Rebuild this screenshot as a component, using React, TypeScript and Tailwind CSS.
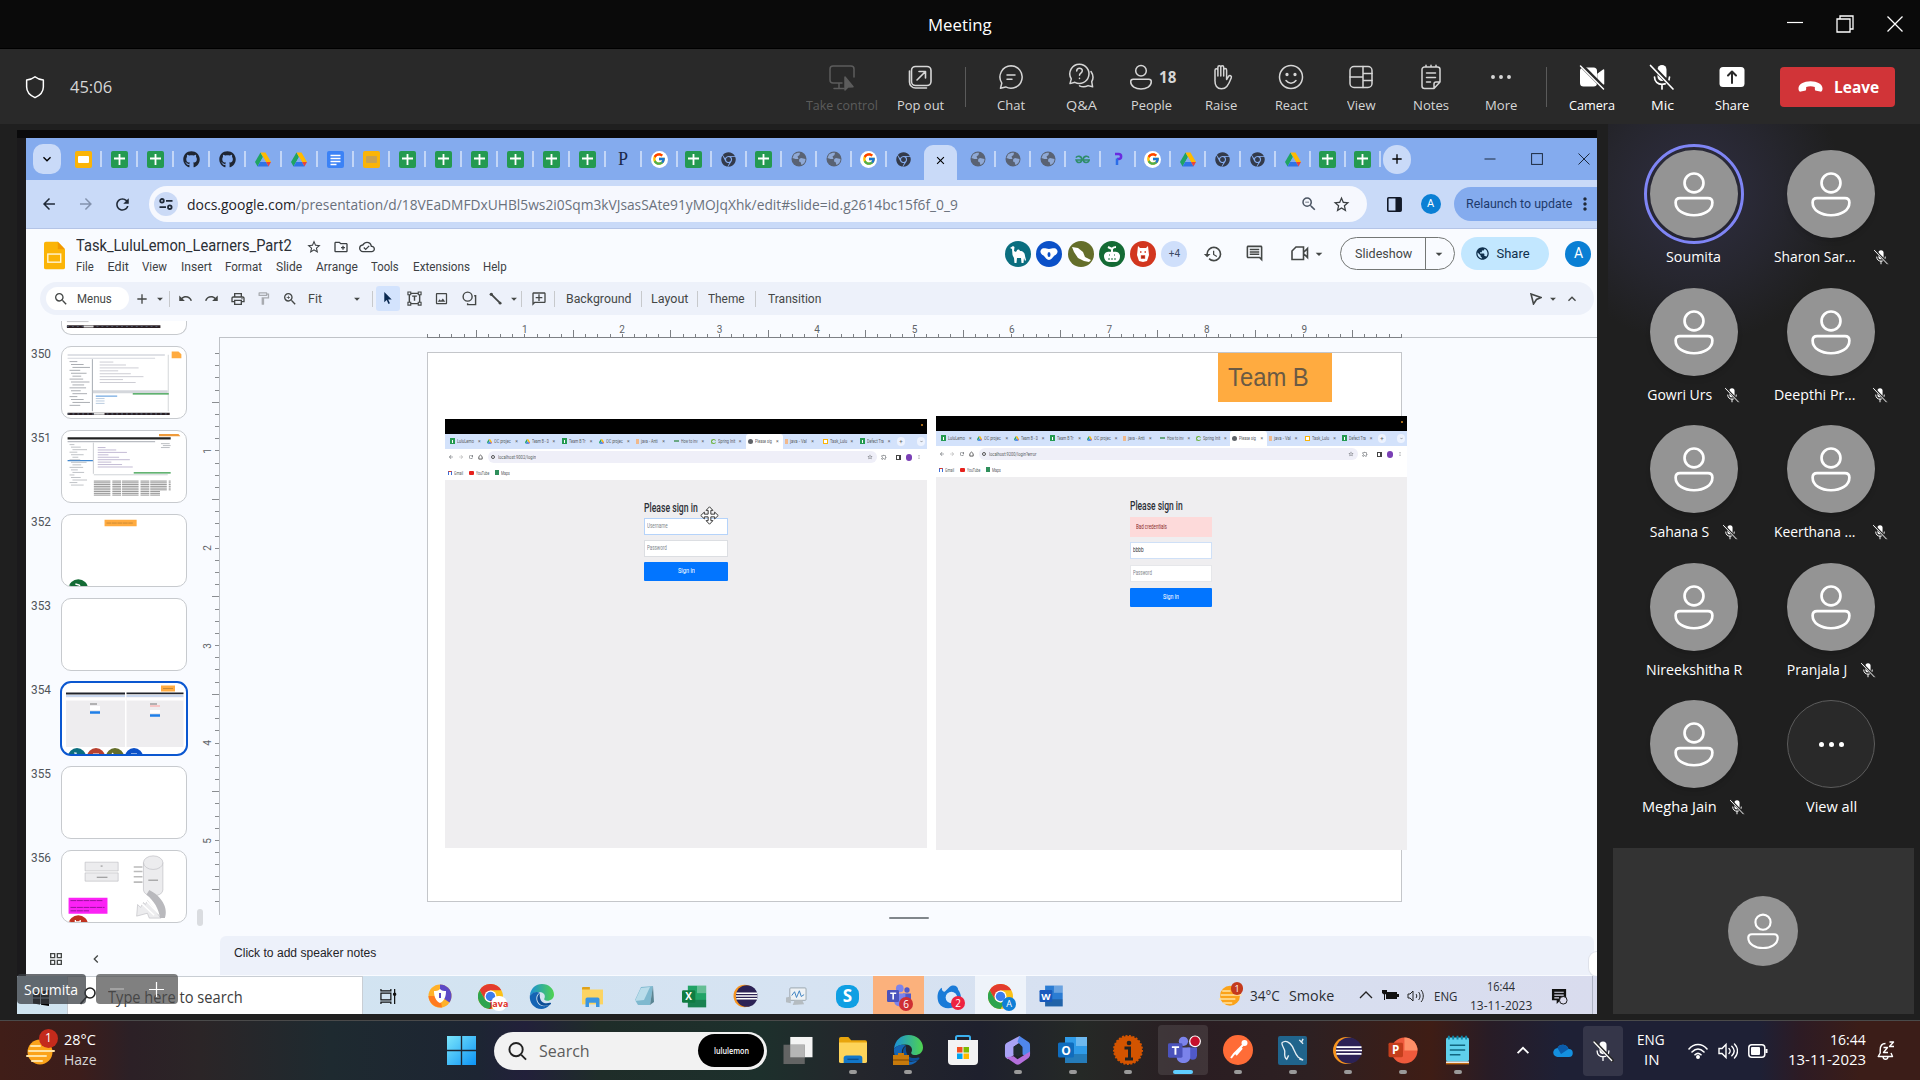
import React, { useLayoutEffect, useRef, useState } from "react";
import { FcGoogle } from "react-icons/fc";
import { FaGithub, FaChrome } from "react-icons/fa";
import {
  MdSearch, MdAdd, MdArrowDropDown, MdUndo, MdRedo, MdOutlinePrint, MdOutlineFormatPaint, MdZoomIn, MdZoomOut,
  MdOutlineImage, MdOutlineAddComment, MdHistory, MdOutlineInsertComment, MdPublic, MdStarBorder,
  MdOutlineCloudDone, MdArrowBack, MdArrowForward, MdRefresh, MdMoreVert, MdKeyboardArrowUp, MdKeyboardArrowDown,
  MdOutlineCreateNewFolder, MdOutlineGridView, MdKeyboardArrowLeft, MdClose, MdOutlineExtension,
} from "react-icons/md";

const UI = "font-['Open_Sans','Noto_Sans',sans-serif]";
const RB = "font-[Roboto,'Noto_Sans',sans-serif]";

/* A single line of text squeezed horizontally into a given width. */
function Fit({ w, className = "", children }: { w: number; className?: string; children: React.ReactNode }) {
  const ref = useRef<HTMLSpanElement>(null);
  const [s, setS] = useState(1);
  useLayoutEffect(() => {
    if (ref.current) setS(w / ref.current.offsetWidth);
  }, [w]);
  return (
    <span className={`block shrink-0 whitespace-nowrap ${className}`} style={{ width: w }}>
      <span ref={ref} className="inline-block origin-left" style={{ transform: `scaleX(${s})` }}>{children}</span>
    </span>
  );
}

/* ---------- Meeting icons ---------- */
type SP = { className?: string; children?: React.ReactNode; box?: string; sw?: number };
const S = ({ className = "h-7 w-7", children, box = "0 0 28 28", sw = 1.5 }: SP) => (
  <svg viewBox={box} className={`shrink-0 ${className}`} fill="none" stroke="currentColor" strokeWidth={sw} strokeLinecap="round" strokeLinejoin="round">{children}</svg>
);
const Person = ({ className }: { className?: string }) => (
  <S className={className}><circle cx="14" cy="7.8" r="5.3" /><path d="M6.2 16.3h15.6c1.6 0 2.5 1 2.5 2.4 0 4.600-4.900 7.200-10.300 7.200S3.700 23.300 3.700 18.700c0-1.400 .9-2.400 2.500-2.400Z" /></S>
);
const MicOff = ({ className = "h-7 w-7" }: { className?: string }) => (
  <S className={className} sw={1.7}>
    <rect x="9.500" y="2" width="9" height="16" rx="4.500" fill="currentColor" stroke="none" />
    <path d="M6.500 14c0 4.500 3.300 7.300 7.500 7.300s7.500-2.800 7.500-7.300M14 21.500V26" />
    <path d="M3.500 2.500 26 26" stroke="#292929" strokeWidth="4" /><path d="M2.500 2.500 25 26" />
  </S>
);

const toolA: { label: string; w: number; icon: React.ReactNode }[] = [
  { label: "Chat", w: 28, icon: <S><path d="M14 2.800a11.200 11.200 0 1 1-5.300 21.100L3.500 25.200l1.300-5.100A11.200 11.200 0 0 1 14 2.800Z" /><path d="M10 12h8M10 16.200h5" /></S> },
  { label: "Q&A", w: 31, icon: <S><path d="M12.500 1.200a9.600 9.600 0 1 1-4.600 18.100L3 20.600l1.300-4.700A9.600 9.600 0 0 1 12.500 1.200Z" /><path d="M9.700 8c0-3.600 5.600-3.600 5.600-.2 0 2.300-2.800 2.300-2.800 4.400M12.500 15.200v.2M24 8.500c2.300 3.300 2.600 7 .7 10.200l.9 5.100-4.500-1.200c-3.100 1.600-6 1.500-8.600.2" /></S> },
  { label: "People", w: 41, icon: <div className="flex items-center gap-1"><Person /><Fit w={17} className="mb-px text-[16px] font-bold leading-5">18</Fit></div> },
  { label: "Raise", w: 32, icon: <S><path d="M8 17V7.200c0-2.100 2.900-2.100 2.900 0V13 4.300c0-2.100 2.900-2.100 2.900 0V13 4.300c0-2.100 2.900-2.100 2.900 0V13 7c0-2.100 2.900-2.100 2.900 0v9.500l2-3.200c1.100-1.400 3.400-.4 2.700 1.400-1.300 3.500-2.500 6.300-4.500 8.700-1.300 1.600-3 2.400-5.400 2.400-4.800 0-6.500-3.900-6.500-8.800Z" /></S> },
  { label: "React", w: 33, icon: <S><circle cx="14" cy="14" r="11.500" /><circle cx="10" cy="11.500" r=".9" fill="currentColor" /><circle cx="18" cy="11.500" r=".9" fill="currentColor" /><path d="M9 17.500c2.700 3.500 7.300 3.500 10 0" /></S> },
  { label: "View", w: 29, icon: <S><rect x="3" y="3.500" width="22" height="21" rx="4" /><path d="M16 3.500v21M3 14h13M16 10.500h9M16 17.500h9" /></S> },
  { label: "Notes", w: 36, icon: <S><path d="M5 6.500A2.500 2.500 0 0 1 7.500 4h13A2.500 2.500 0 0 1 23 6.500V19l-6 6.500H7.500A2.500 2.500 0 0 1 5 23ZM17 25.500V21c0-1.200.8-2 2-2h4M9 4V2.300M14 4V2.300M19 4V2.300M9.500 10h9M9.500 14.500h9M9.500 19h4" /></S> },
  { label: "More", w: 32, icon: <S><circle cx="6" cy="14" r="1.200" fill="currentColor" /><circle cx="14" cy="14" r="1.200" fill="currentColor" /><circle cx="22" cy="14" r="1.200" fill="currentColor" /></S> },
];
const toolB: { label: string; w: number; icon: React.ReactNode }[] = [
  { label: "Camera", w: 46, icon: <S><rect x="2" y="4.500" width="17" height="19" rx="3.500" fill="currentColor" stroke="none" /><path d="m20 11 5.500-4v14L20 17Z" fill="currentColor" /><path d="M3.500 2.500 27 26" stroke="#292929" strokeWidth="4" /><path d="M2.500 3 25.500 26" /></S> },
  { label: "Mic", w: 23, icon: <MicOff /> },
  { label: "Share", w: 34, icon: <S sw={2}><rect x="1.500" y="4" width="25" height="20" rx="3.500" fill="currentColor" stroke="none" /><path d="M14 20V8.500M10 12.500l4-4 4 4" stroke="#292929" /></S> },
];

function ToolItem({ label, w, icon, className = "text-[#d6d6d6]" }: { label: string; w: number; icon: React.ReactNode; className?: string }) {
  return (
    <div className={`flex h-full w-[70px] shrink-0 flex-col items-center pt-[14px] ${className}`}>
      <div className="flex h-7 items-center">{icon}</div>
      <Fit w={w} className="mt-[4px] text-[13.500px] leading-5">{label}</Fit>
    </div>
  );
}

function MeetingBar() {
  return (
    <div className={`flex h-[75px] shrink-0 items-center bg-[#292929] ${UI}`}>
      <S className="ml-[22px] h-[26px] w-[26px] text-white" sw={1.6}><path d="M14 3c2.600 2.200 5.200 3.200 9 3.500v7.500c0 5.500-3.500 9-9 11.500-5.500-2.500-9-6-9-11.500V6.500C8.800 6.200 11.400 5.200 14 3Z" /></S>
      <Fit w={42} className="ml-[22px] mt-px text-[16.500px] leading-6 text-[#d6d6d6]">45:06</Fit>
      <div className="ml-[689px] flex h-full w-[82px] flex-col items-center pt-[14px] text-[#5c5c5c]">
        <S><path d="M14 20H5a3 3 0 0 1-3-3V6a3 3 0 0 1 3-3h18a3 3 0 0 1 3 3v8M11 20v5M6 25.500h10" /><path d="M17 14v13l3-3 5-.3Z" fill="currentColor" /></S>
        <Fit w={72} className="mt-[4px] text-[13.500px] leading-5">Take control</Fit>
      </div>
      <div className="ml-[2px] flex h-full"><ToolItem label="Pop out" w={47} icon={<S sw={1.6}><path d="M20.500 25h-11A6 6 0 0 1 3.500 19V8" /><rect x="5.500" y="3.500" width="19.500" height="19" rx="4" /><path d="M11 17 19.500 8.500M13 8.500h6.500V15" /></S>} /></div>
      <div className="ml-[10px] h-10 w-px bg-[#5a5a5a]" />
      <div className="ml-[10px] flex h-full">{toolA.map((t) => <ToolItem key={t.label} {...t} />)}</div>
      <div className="ml-[10px] h-10 w-px bg-[#5a5a5a]" />
      <div className="ml-[10px] flex h-full">{toolB.map((t) => <ToolItem key={t.label} {...t} className="text-white" />)}</div>
      <div className="ml-[13px] flex h-10 w-[115px] items-center rounded bg-[#d13438] pl-[18px] text-white">
        <svg viewBox="0 0 26 12" className="h-[12px] w-[25px]" fill="currentColor"><path d="M13 0c7 0 12.500 3 12.500 7.500 0 2-.8 3.600-2.500 3.300l-3.800-.8c-1.200-.3-1.700-1-1.700-2.300V6c-3-.9-6-.9-9 0v1.700c0 1.300-.5 2-1.700 2.300L3 10.800C1.300 11.100.5 9.500.5 7.500.5 3 6 0 13 0Z" /></svg>
        <Fit w={45} className="ml-[11px] text-[16.500px] font-bold leading-6">Leave</Fit>
      </div>
    </div>
  );
}

/* ---------- Small product icons ---------- */
const Sheet = () => <svg viewBox="0 0 17 17" className="h-[17px] w-[17px]"><rect width="17" height="17" rx="2" fill="#249a50" /><path d="M8.500 3v11M3 7.500h11" stroke="#fff" strokeWidth="1.800" /></svg>;
const SlidesIc = ({ hollow }: { hollow?: boolean }) => <svg viewBox="0 0 17 17" className="h-[17px] w-[17px]"><rect width="17" height="17" rx="2" fill="#fbb407" /><rect x="3" y="5" width="11" height="7" rx="1" fill={hollow ? "#c9a251" : "#fff"} /></svg>;
const Doc = () => <svg viewBox="0 0 17 17" className="h-[17px] w-[17px]"><rect width="17" height="17" rx="2" fill="#3b82f6" /><path d="M3.500 4.500h10M3.500 7.500h10M3.500 10.500h10M3.500 13.500h6" stroke="#fff" strokeWidth="1.500" /></svg>;
const Drive = ({ className = "h-[15px] w-[16px]" }: { className?: string }) => <svg viewBox="0 0 16 14" className={className}><path d="M5.500 0 0 9.500 2.500 14 8 4.500Z" fill="#1fa463" /><path d="M5.500 0h5L16 9.500h-5Z" fill="#ffba00" /><path d="M5.300 9.500H11L8 4.500Z" fill="#84abee" /><path d="M5.200 9.500H11L13.500 14h-11Z" fill="#2f74e6" /><path d="M11 9.500h5L13.500 14Z" fill="#e8453c" /></svg>;
const Globe = () => <svg viewBox="0 0 16 16" className="h-4 w-4"><circle cx="8" cy="8" r="7.500" fill="#596273" /><path d="M3 3.500C5 2 7 1.500 9 1.800L8.500 4l-2 1.500L7.500 8H4.500l-3-1ZM10 7l4.500 1c0 3-1.500 5-4 6L9.500 11l-1.500-.5.3-2.500Z" fill="#8fa9d6" /></svg>;
const Goog = () => <span className="flex h-[17px] w-[17px] items-center justify-center rounded-full bg-white"><FcGoogle className="h-[14px] w-[14px]" /></span>;
const Chr = () => <FaChrome className="h-[15px] w-[15px] text-[#333a4a]" />;
const Git = () => <FaGithub className="h-[17px] w-[17px] text-[#1f2633]" />;
const PIc = () => <span className="font-['Liberation_Serif',serif] text-[18px] leading-5 text-[#1b2a4a]">P</span>;
const Gfg = () => (
  <svg viewBox="0 0 16 9" className="h-[9px] w-[15px]" fill="none" stroke="#2f8d6a" strokeWidth="1.700"><path d="M1 2.500C2.500.3 7.200.5 7.200 4.500S2.200 8.800 1.200 5h14c-1 3.800-6.400 3.500-6.400-.5S13.500.3 15 2.500" /></svg>
);
const Pp = () => <svg viewBox="0 0 12 16" className="h-4 w-3" fill="none" strokeWidth="2.500"><path d="M3 3h3.500c3.500 0 3.500 5 0 5H5" stroke="#6a2be0" /><path d="M5 7.500v6.500" stroke="#2b6de8" /></svg>;
const WinLogo = ({ className }: { className?: string }) => (
  <svg viewBox="0 0 30 30" className={className}><defs><linearGradient id="win" x1="0" y1="0" x2="1" y2="1"><stop offset="0" stopColor="#7be6fb" /><stop offset="1" stopColor="#0c93f5" /></linearGradient></defs><path d="M0 0h14.300v14.300H0ZM15.700 0H30v14.300H15.700ZM0 15.700h14.300V30H0ZM15.700 15.700H30V30H15.700Z" fill="url(#win)" /></svg>
);

const tabs1 = [<SlidesIc />, <Sheet />, <Sheet />, <Git />, <Git />, <Drive />, <Drive />, <Doc />, <SlidesIc hollow />, <Sheet />, <Sheet />, <Sheet />, <Sheet />, <Sheet />, <Sheet />, <PIc />, <Goog />];
const tabs2 = [<Sheet />, <Chr />, <Sheet />, <Globe />, <Globe />, <Goog />, <Chr />];
const tabs3 = [<Globe />, <Globe />, <Globe />, <Gfg />, <Pp />, <Goog />, <Drive />, <Chr />, <Chr />, <Drive />, <Sheet />, <Sheet />];

function Tab({ children, wide, last }: { children: React.ReactNode; wide?: boolean; last?: boolean }) {
  return (
    <div className={`flex h-4 shrink-0 items-center justify-center border-r-2 ${wide ? "w-9" : "w-[35px]"} ${last ? "border-transparent" : "border-[#c3d6f7]"}`}>{children}</div>
  );
}

function TabStrip() {
  return (
    <div className="flex h-[42px] shrink-0 items-center bg-[#84abee]">
      <div className="ml-[7px] flex h-[30px] w-[28px] items-center justify-center rounded-[10px] bg-[#c9daf8]"><MdKeyboardArrowDown className="h-4 w-4 text-black" /></div>
      <div className="ml-[5px] flex items-center">{tabs1.map((t, i) => <Tab key={i} wide>{t}</Tab>)}</div>
      <div className="-ml-px flex items-center">{tabs2.map((t, i) => <Tab key={i} last={i === 6}>{t}</Tab>)}</div>
      <div className="ml-[2px] mt-[7px] flex h-[35px] w-[33px] shrink-0 items-center justify-center rounded-t-[9px] bg-[#c9daf8] pb-[5px]"><MdClose className="h-[13px] w-[13px] text-black" /></div>
      <div className="ml-[4px] flex items-center">{tabs3.map((t, i) => <Tab key={i}>{t}</Tab>)}</div>
      <div className="ml-[2px] flex h-[29px] w-[28px] items-center justify-center rounded-full bg-[#c9daf8]"><MdAdd className="h-4 w-4 text-black" /></div>
      <div className="ml-[73px] flex w-[106px] items-center justify-between text-[#1c2a3f]">
        <svg viewBox="0 0 12 12" className="h-3 w-3"><path d="M.5 6h11" stroke="currentColor" /></svg>
        <svg viewBox="0 0 12 12" className="h-3 w-3"><rect x=".6" y=".6" width="10.800" height="10.800" fill="none" stroke="currentColor" /></svg>
        <svg viewBox="0 0 12 12" className="h-3 w-3"><path d="m.5.5 11 11M11.500.5l-11 11" stroke="currentColor" /></svg>
      </div>
    </div>
  );
}

function NavBar() {
  return (
    <div className="flex h-[49px] shrink-0 items-center border-b border-[#b4c4e6] bg-[#c9daf8]">
      <MdArrowBack className="ml-[14px] h-[18px] w-[18px] text-[#1f2937]" />
      <MdArrowForward className="ml-[19px] h-[18px] w-[18px] text-[#8392ad]" />
      <MdRefresh className="ml-[18px] h-[19px] w-[19px] text-[#1f2937]" />
      <div className={`ml-[17px] flex h-9 w-[1218px] shrink-0 items-center rounded-full bg-[#f6f8fe] ${UI}`}>
        <div className="ml-[5px] flex h-6 w-6 items-center justify-center rounded-full bg-[#cbdaf6]">
          <svg viewBox="0 0 14 12" className="h-3 w-3.5" fill="none" stroke="#1f2937" strokeWidth="1.800"><circle cx="3" cy="2.800" r="1.800" /><path d="M7 2.800h6.500M.5 9.200H7" /><circle cx="10.800" cy="9.200" r="1.800" /></svg>
        </div>
        <Fit w={109} className="ml-[9px] text-[15px] leading-6 text-[#1f2328]">docs.google.com</Fit>
        <Fit w={662} className="text-[15px] leading-6 text-[#6a717c]">/presentation/d/18VEaDMFDxUHBl5ws2i0Sqm3kVJsasSAte91yMOJqXhk/edit#slide=id.g2614bc15f6f_0_9</Fit>
        <MdZoomOut className="ml-[342px] h-[18px] w-[18px] text-[#4b5563]" />
        <MdStarBorder className="ml-[14px] h-[19px] w-[19px] text-[#3c4043]" />
      </div>
      <svg viewBox="0 0 15 15" className="ml-[20px] h-[15px] w-[15px]"><rect x=".8" y=".8" width="13.400" height="13.400" rx="1" fill="none" stroke="#111827" strokeWidth="1.600" /><path d="M8.500 1H14v13H8.500Z" fill="#111827" /></svg>
      <div className={`ml-[19px] flex h-[20px] w-[20px] items-center justify-center rounded-full bg-[#0a7fd4] text-[11px] text-white ${RB}`}>A</div>
      <div className="ml-[13px] flex h-[34px] w-[144px] items-center rounded-l-full bg-[#84abee]">
        <Fit w={106} className={`ml-[12px] text-[13px] leading-5 text-[#1e3a6b] ${RB}`}>Relaunch to update</Fit>
        <MdMoreVert className="ml-[3px] h-[20px] w-[20px] text-[#1f2937]" />
      </div>
    </div>
  );
}

const menus: [string, number][] = [["File", 18], ["Edit", 21], ["View", 25], ["Insert", 31], ["Format", 37], ["Slide", 26], ["Arrange", 42], ["Tools", 28], ["Extensions", 57], ["Help", 24]];

function Animal({ color, children }: { color: string; children: React.ReactNode }) {
  return <svg viewBox="0 0 26 26" className="h-[26px] w-[26px] shrink-0"><circle cx="13" cy="13" r="13" fill={color} />{children}</svg>;
}

function DocsHeader() {
  return (
    <div className="flex h-[53px] shrink-0 bg-[#f9fbff]">
      <svg viewBox="0 0 22 29" className="ml-[18px] mt-[12px] h-[29px] w-[21px]"><path d="M2 0h12.500L22 8v19a2 2 0 0 1-2 2H2a2 2 0 0 1-2-2V2a2 2 0 0 1 2-2Z" fill="#fbb407" /><path d="M14.500 0 22 8h-7.500Z" fill="#f29900" /><rect x="4" y="13" width="13.500" height="8.500" fill="none" stroke="#fff3d0" strokeWidth="1.500" /></svg>
      <div className={`ml-[11px] mt-[7px] w-[471px] text-[#3c4043] ${RB}`}>
        <div className="flex h-5 items-center">
          <Fit w={216} className="text-[16.500px] leading-5 text-[#2b2f36]">Task_LuluLemon_Learners_Part2</Fit>
          <MdStarBorder className="ml-[14px] mt-[2px] h-4 w-4" /><MdOutlineCreateNewFolder className="ml-[11px] mt-[2px] h-4 w-4" /><MdOutlineCloudDone className="ml-[10px] mt-[2px] h-4 w-4" />
        </div>
        <div className="mt-px flex gap-[13.600px]">{menus.map(([m, w]) => <Fit key={m} w={w} className="text-[12.500px] leading-5">{m}</Fit>)}</div>
      </div>
      <div className="ml-[458px] flex h-[49px] items-center">
        <div className="flex gap-[5.300px]">
          <Animal color="#0b6e7f"><path d="M5 7l3-2 1.500 1-.5 4 2 1c1-3 3-3 4-1 3 0 5 2 5 5l1 4-1 1-1-3-.5 5h-2l-.5-5h-4l-.5 5h-2l-.5-5-1.500-3-.5-6Z" fill="#fff" /></Animal>
          <Animal color="#0b50c8"><path d="M5 9c2-3 5-1 8-1s6-2 8 1-2 5-3 6-3 4-5 4-4-3-5-4-5-3-3-6Z" fill="#fff" /><ellipse cx="13" cy="13.500" rx="1.500" ry="2.500" fill="#0b50c8" /></Animal>
          <Animal color="#646e2a"><path d="M4 6l6 1 5 4 2 5 6 3-2 2-5-1-6-3-4-6Z" fill="#fff" /></Animal>
          <Animal color="#146b35"><path d="M5 15c0-4 4-5 8-4 4-1 8 0 8 4s-2 6-5 6h-6c-3 0-5-3-5-6Z" fill="#fff" /><path d="M13 11V8M13 8l-4-2M13 8c1-2 3-2 4-2" stroke="#fff" fill="none" strokeWidth="2" /><path d="M9 18h8M10 14h1M15 14h1" stroke="#146b35" strokeDasharray="2 1" /></Animal>
          <Animal color="#d2361f"><path d="M8 5l2 2h6l2-2 1 9-2 6-4 1-4-1-2-6Z" fill="#fff" /><path d="M10 11h1.500M14.500 11H16M11.500 15h3v2h-3Z" stroke="#d2361f" strokeWidth="1.300" /></Animal>
          <div className={`flex h-[26px] w-[26px] items-center justify-center rounded-full bg-[#cfdffb] text-[10px] text-[#3c4a63] ${RB}`}>+4</div>
        </div>
        <MdHistory className="ml-[16px] h-5 w-5 text-[#444746]" />
        <MdOutlineInsertComment className="ml-[22px] h-[19px] w-[19px] text-[#444746]" />
        <svg viewBox="0 0 18 15" className="ml-[27px] h-[15px] w-[18px]" fill="none" stroke="#444746" strokeWidth="1.600"><path d="M5 1h7.500v12.500H1V5ZM13 6l3.500-3.500v9L13 8" /></svg>
        <MdArrowDropDown className="ml-[2px] h-[16px] w-[16px] text-[#444746]" />
        <div className={`ml-[13px] flex h-[33px] w-[115px] items-center rounded-full border border-[#747775] text-[#444746] ${RB}`}>
          <div className="flex h-full w-[85px] items-center justify-center border-r border-[#747775]"><Fit w={57} className="text-[13px] leading-5">Slideshow</Fit></div>
          <MdArrowDropDown className="ml-[5px] h-4 w-4" />
        </div>
        <div className={`ml-[6px] flex h-[33px] w-[88px] items-center rounded-full bg-[#c2e7ff] text-[#10304d] ${RB}`}>
          <MdPublic className="ml-[14px] h-[15px] w-[15px]" /><Fit w={33} className="ml-[6px] text-[13px] leading-5">Share</Fit>
        </div>
        <div className={`ml-[16px] flex h-[26px] w-[26px] items-center justify-center rounded-full bg-[#0a7fd4] text-[14px] text-white ${RB}`}>A</div>
      </div>
    </div>
  );
}

const Sep = ({ className }: { className: string }) => <div className={`h-4 w-px shrink-0 bg-[#c7c9cc] ${className}`} />;

function DocsToolbar() {
  return (
    <div className="shrink-0 bg-[#f9fbff] pl-[14px] pr-[3px]">
      <div className={`flex h-[33px] items-center rounded-full bg-[#edf1fa] text-[#444746] ${RB}`}>
        <div className="ml-[6px] flex h-[23px] w-[83px] items-center rounded-full bg-white">
          <MdSearch className="ml-[7px] h-4 w-4" /><Fit w={35} className="ml-[8px] text-[12.500px] leading-5">Menus</Fit>
        </div>
        <MdAdd className="ml-[5px] h-4 w-4" /><MdArrowDropDown className="ml-[3px] h-[14px] w-[14px]" />
        <Sep className="ml-[2px]" />
        <MdUndo className="ml-[8px] h-[15px] w-[15px]" /><MdRedo className="ml-[11px] h-[15px] w-[15px]" />
        <MdOutlinePrint className="ml-[11px] h-4 w-4" /><MdOutlineFormatPaint className="ml-[10px] h-[15px] w-[15px] text-[#a8abb0]" />
        <MdZoomIn className="ml-[11px] h-4 w-4" />
        <Fit w={14} className="ml-[10px] text-[12.500px] leading-5">Fit</Fit>
        <MdArrowDropDown className="ml-[28px] h-[14px] w-[14px]" />
        <Sep className="ml-[8px]" />
        <div className="ml-[3px] flex h-[25px] w-[24px] items-center justify-center rounded-[3px] bg-[#d3e3fd]">
          <svg viewBox="0 0 10 14" className="h-[13px] w-[10px]"><path d="M1 0v11l2.600-2.500L5.500 13l1.600-.8-1.900-4.200H9Z" fill="#0b2a52" /></svg>
        </div>
        <svg viewBox="0 0 16 16" className="ml-[7px] h-[15px] w-[15px]" fill="none" stroke="#444746" strokeWidth="1.500"><path d="M2.500 2.500h11v11h-11ZM5.500 5.500h5M8 5.500v5" /><path d="M1 1h3v3H1ZM12 1h3v3h-3ZM1 12h3v3H1ZM12 12h3v3h-3Z" fill="#edf1fa" strokeWidth="1.200" /></svg>
        <MdOutlineImage className="ml-[12px] h-[15px] w-[15px]" />
        <svg viewBox="0 0 16 16" className="ml-[13px] h-[15px] w-[15px]" fill="none" stroke="#444746" strokeWidth="1.500"><circle cx="6" cy="6" r="4.800" /><path d="M13 5h1.500v9.500H6V13" /></svg>
        <svg viewBox="0 0 14 14" className="ml-[12px] h-[13px] w-[13px]"><path d="m2 2 10 10" stroke="#444746" strokeWidth="2" /><circle cx="2.500" cy="2.500" r="1.800" fill="#444746" /><circle cx="12" cy="12" r="1.500" fill="#444746" /></svg>
        <MdArrowDropDown className="ml-[5px] h-[14px] w-[14px]" />
        <Sep className="ml-0" />
        <MdOutlineAddComment className="ml-[9px] h-4 w-4 -scale-x-100" />
        <Sep className="ml-[7px]" />
        <Fit w={65} className="ml-[11px] text-[12.500px] leading-5">Background</Fit>
        <Sep className="ml-[10px]" />
        <Fit w={37} className="ml-[9px] text-[12.500px] leading-5">Layout</Fit>
        <Sep className="ml-[9px]" />
        <Fit w={37} className="ml-[10px] text-[12.500px] leading-5">Theme</Fit>
        <Sep className="ml-[10px]" />
        <Fit w={53} className="ml-[12px] text-[12.500px] leading-5">Transition</Fit>
        <svg viewBox="0 0 12 12" className="ml-[709px] h-[12px] w-[12px]" fill="none" stroke="#444746" strokeWidth="1.600"><path d="m1 1 10 3.500L6.500 6.500 3.500 11Z" /></svg>
        <MdArrowDropDown className="ml-[4px] h-[14px] w-[14px]" /><MdKeyboardArrowUp className="ml-[4px] h-4 w-4" />
      </div>
    </div>
  );
}

/* ---------- Film strip ---------- */
const codeRows = Array.from({ length: 34 }, (_, i) => i);
function ThumbArt({ n }: { n: number }) {
  if (n === 350)
    return (
      <svg viewBox="0 0 126 73" className="h-full w-full">
        <path d="M112 4.500h7l3 3v4h-10Z" fill="#ffab40" /><path d="M5 7.500h100v1.500H5ZM5 11h90v1.200H5Z" fill="#d5d8de" />
        <path d="M30.500 12.500V66" stroke="#8d939c" strokeWidth=".8" /><path d="M108.500 8v58" stroke="#b6bac0" strokeWidth=".6" />
        <path d="M31 44.500h77v3H31Z" fill="#d4d7dc" /><path d="M72 48.300h37" stroke="#2f9a43" strokeWidth="1.300" /><path d="M34 50.500h22" stroke="#4a8fd8" strokeWidth="1" />
        {codeRows.slice(0, 16).map((i) => <path key={i} d={`M${7 + (i % 3) * 1.5} ${15 + i * 3}h${8 + ((i * 5) % 12)}`} stroke="#93979d" strokeWidth=".8" />)}
        {codeRows.slice(0, 8).map((i) => <path key={i} d={`M38 ${15.5 + i * 3}h${14 + ((i * 13) % 34)}`} stroke="#b5b5c0" strokeWidth=".7" />)}
        {codeRows.slice(0, 3).map((i) => <path key={i} d={`M34 ${53 + i * 2.5}h9`} stroke="#9bb4d0" strokeWidth=".7" />)}
        <path d="M5 67.500h105v2.500H5Z" fill="#2b2024" /><path d="M5 68.800h105" stroke="#5a6a80" strokeDasharray="2 3" strokeWidth="1" /><path d="M32 67.700h11v2H32Z" fill="#e6e6e6" />
      </svg>
    );
  if (n === 351)
    return (
      <svg viewBox="0 0 126 73" className="h-full w-full">
        <path d="M99 3h20l2 2.500H99Z" fill="#ef9a3a" /><path d="M5 6.500h106v2.200H5Z" fill="#222" /><path d="M5 11h90" stroke="#b9bcc2" strokeWidth="1.200" />
        <path d="M31.500 12v32" stroke="#a3a8ae" strokeWidth=".6" /><path d="M5 30.500h26" stroke="#3f86cf" strokeWidth="1.400" /><path d="M73 43h38" stroke="#2f9a43" strokeWidth="1.200" /><path d="M32 45h76" stroke="#c3c7cc" strokeWidth=".8" />
        {codeRows.slice(0, 17).map((i) => <path key={i} d={`M${7 + (i % 3) * 1.5} ${14 + i * 2.6}h${5 + ((i * 5) % 12)}`} stroke="#a2a6ac" strokeWidth=".7" />)}
        {codeRows.slice(0, 9).map((i) => <path key={i} d={`M36 ${17 + i * 2.5}h${8 + ((i * 11) % 30)}`} stroke="#a79bc0" strokeWidth=".7" />)}
        <path d="M101 13h9M103 15h8M101 17h9" stroke="#8a8f96" strokeWidth=".6" />
        {codeRows.slice(0, 9).map((i) => <path key={i} d={`M32 ${51.5 + i * 1.8}h${i > 5 ? 68 : 79}`} stroke="#8f8f8f" strokeWidth="1" strokeDasharray="17 2 9 1" />)}
      </svg>
    );
  if (n === 352)
    return (
      <svg viewBox="0 0 126 73" className="h-full w-full"><path d="M43 5h33v6.500H43Z" fill="#ffab40" /><path d="M45 8.300h27" stroke="#c98a36" strokeWidth="1" strokeDasharray="5 .6" /><circle cx="16" cy="76" r="10" fill="#146b35" /><path d="M13 71l4 1 1 2" stroke="#fff" fill="none" strokeWidth="1.500" /></svg>
    );
  if (n === 354)
    return (
      <svg viewBox="0 0 126 73" className="h-full w-full">
        <path d="M100 3.500h14v6h-14Z" fill="#ffab40" /><path d="M102 6.500h10" stroke="#c98a36" /><path d="M5 13.500h59V65H5ZM65.500 13.500h57V65h-57Z" fill="#eeedef" />
        <path d="M5 11.500h59M65.500 11.300h57" stroke="#20242c" strokeWidth="1.800" /><path d="M5 14h59M65.500 14h57" stroke="#c9d8f0" strokeWidth="2" /><path d="M5 17h59M65.500 17h57" stroke="#fff" strokeWidth="3" />
        <path d="M29 22h7M89 22h7" stroke="#777" strokeWidth="1" /><path d="M29 24h10v4H29ZM89 28h10v3H89Z" fill="#fff" /><path d="M89 24h10" stroke="#f6c6c6" strokeWidth="2" /><path d="M29 30.500h10M89 33.500h10" stroke="#1f7fe8" strokeWidth="2.500" />
        <circle cx="16" cy="75" r="9" fill="#0b6e7f" /><circle cx="35" cy="75" r="9" fill="#b8402f" /><circle cx="54" cy="75" r="9" fill="#646e2a" /><circle cx="73" cy="75" r="9" fill="#0b50c8" /><path d="M13 71h2v2h3M32 72h6M51 71l2 2M70 72h6" stroke="#fff" strokeWidth="1.200" fill="none" />
      </svg>
    );
  if (n === 356)
    return (
      <svg viewBox="0 0 126 73" className="h-full w-full">
        <g fill="#ececee" stroke="#b9b9bd" strokeWidth=".6"><path d="M23 11.500h34v9H23ZM23 22.500h34v8.500H23Z" /><path d="M83 12v28c0 8 20 8 20 0V12Z" /><ellipse cx="93" cy="12" rx="10" ry="7" /><path d="m76 67 1-12 3 3 3-5 2 2 2-4 14 18H89l-2-5Z" /></g>
        <path d="M73 16.500h9M73 21h9M73 26.500h9M73 32h9" stroke="#bbb" strokeWidth="1.600" /><path d="m80 53 14 13M84 49l14 15" stroke="#fff" strokeWidth="1.500" /><path d="M89 40c12 6 20 18 16 29h-5c-1-9-6-18-14-24Z" fill="#b9b9bd" />
        <path d="M39 15.500h2M35 27h11M88 30h10" stroke="#888" strokeWidth="1" />
        <path d="M6 48h40v16.500H6Z" fill="#fb22f5" /><path d="M8 51h33M8 58h35M8 61.500h19" stroke="#8a1090" strokeWidth=".9" strokeDasharray="6 .7" />
        <circle cx="16" cy="76" r="10" fill="#c0321f" /><path d="M13 71v2h5v-2" stroke="#fff" strokeWidth="1.300" fill="none" />
      </svg>
    );
  return null;
}

function FilmStrip() {
  return (
    <div className="flex w-[163px] shrink-0 flex-col pt-[6px]">
      <div className="ml-[35px] flex h-[14px] w-[126px] shrink-0 items-start rounded-b-[10px] border border-t-0 border-[#c7cace] bg-white">
        <svg viewBox="0 0 126 14" className="h-[14px] w-full"><path d="M5 .5h22" stroke="#c4c4c8" /><path d="M5 5.500h95" stroke="#2b2024" strokeWidth="2.800" /><path d="M5 5.500h95" stroke="#4a5568" strokeDasharray="2 3" strokeWidth="1" /><path d="M22 5.500h10" stroke="#ddd" strokeWidth="2" /></svg>
      </div>
      {[350, 351, 352, 353, 354, 355, 356].map((n) => (
        <div key={n} className="mt-[11px] flex h-[73px] shrink-0">
          <div className={`flex w-[35px] justify-start ${RB}`}><Fit w={20} className="-mt-px ml-[5px] text-[13px] leading-[18px] text-[#50545a]">{n}</Fit></div>
          <div className={`h-[73px] w-[126px] overflow-hidden rounded-[10px] bg-white ${n === 354 ? "outline-2 -outline-offset-1 outline-[#0b57d0]" : "border border-[#c7cace]"}`}><ThumbArt n={n} /></div>
        </div>
      ))}
      <div className="flex flex-1 items-center pt-[18px] text-[#444746]"><MdOutlineGridView className="ml-[22px] h-4 w-4" /><MdKeyboardArrowLeft className="ml-[24px] h-4 w-4" /></div>
    </div>
  );
}

/* ---------- Slide content ---------- */
const miniTabs: [string, string][] = [
  ["LuluLemo", "#249a50"], ["OC projec", "#2f74e6"], ["Team B - D", "#2f74e6"], ["Team B Tr", "#249a50"], ["OC projec", "#2f74e6"], ["java - Anti", "#f08a3c"],
  ["How to inv", "#2f8d46"], ["Spring Init", "#6db33f"], ["Please sig", "#5f6368"], ["java - Val", "#f08a3c"], ["Task_Lulu", "#fbb407"], ["Defect Tra", "#249a50"],
];

function MiniIcon({ c }: { c: string }) {
  if (c === "#2f74e6") return <Drive className="h-[5px] w-[5px]" />;
  if (c === "#5f6368") return <span className="h-[5px] w-[5px] rounded-full bg-[#5f6368]" />;
  if (c === "#6db33f") return <span className="h-[5px] w-[5px] rounded-full border border-r-0 border-[#6db33f]" />;
  if (c === "#2f8d46") return <span className="h-[2px] w-[5px] bg-[#6aa884]" />;
  if (c === "#f08a3c") return <span className="h-[5px] w-[3px] bg-[#f0b98c]" />;
  if (c === "#fbb407") return <span className="h-[5px] w-[5px] border border-[#fbb407] bg-white" />;
  return <span className="flex h-[6px] w-[5px] items-center justify-center bg-[#249a50]"><span className="h-[3px] w-px bg-white" /></span>;
}

function MiniBrowser({ url, urlW, tabsCls, barCls }: { url: string; urlW: number; tabsCls: string; barCls: string }) {
  return (
    <div className={`${RB} text-[#5a5e63]`}>
      <div className="flex h-[14.500px] items-start justify-end bg-black pr-[4px] pt-[5px]"><span className="h-[2px] w-[2px] rounded-full bg-[#d98a1f]" /></div>
      <div className="flex h-[15px] items-center bg-[#d3e2fb] pl-[3px]">
        <div className={`flex h-full items-center ${tabsCls}`}>
          {miniTabs.map(([t, c], i) => (
            <div key={i} className={`flex h-full flex-1 items-center pl-[2px] ${i === 8 ? "rounded-t-[3px] bg-white" : ""}`}>
              <MiniIcon c={c} />
              <Fit w={17} className="ml-[2px] text-[5px] leading-[8px]">{t}</Fit>
              <span className="ml-[4px] text-[5px] leading-[8px]">×</span>
            </div>
          ))}
        </div>
        <span className="ml-[2px] flex h-[9px] w-[8px] items-center justify-center rounded-full bg-[#edf3fe] text-[6px] leading-none">+</span>
        <span className="ml-auto mr-[2px] flex h-[9px] w-[8px] items-center justify-center rounded-full bg-[#edf3fe]"><MdKeyboardArrowDown className="h-[5px] w-[5px]" /></span>
      </div>
      <div className="flex h-[17px] items-center bg-white pl-[3px]">
        <MdArrowBack className="h-[6px] w-[6px]" /><MdArrowForward className="ml-[4px] h-[6px] w-[6px] text-[#aaa]" /><MdRefresh className="ml-[4px] h-[6px] w-[6px]" />
        <svg viewBox="0 0 6 6" className="ml-[4px] h-[6px] w-[5px]" fill="none" stroke="#444"><path d="M1 2.500 3 .7l2 1.800v3H1Z" /></svg>
        <div className={`ml-[5px] flex h-[12px] items-center rounded-full bg-[#efeff8] ${barCls}`}>
          <span className="ml-[3px] h-[4px] w-[4px] rounded-full border border-[#555]" />
          <Fit w={urlW} className="ml-[3px] text-[6px] leading-[8px]">{url}</Fit>
          <MdStarBorder className="ml-auto mr-[4px] h-[6px] w-[6px]" />
        </div>
        <MdOutlineExtension className="ml-[4px] h-[6px] w-[6px]" />
        <span className="ml-[9px] h-[5px] w-[5px] border border-r-[2px] border-[#444]" />
        <span className="ml-[5px] h-[7px] w-[6px] rounded-full bg-[#7a3fb5]" /><MdMoreVert className="ml-[4px] h-[6px] w-[6px]" />
      </div>
      <div className="flex h-[14px] items-center gap-[6px] bg-white pl-[3px] text-[5.500px] leading-[8px]">
        <span className="flex items-center gap-[2px]"><span className="h-[4px] w-[4px] border-x border-t border-x-[#3b6fd8] border-t-[#e03b2c]" /><Fit w={9}>Gmail</Fit></span>
        <span className="flex items-center gap-[2px]"><span className="h-[4px] w-[5px] rounded-[1px] bg-[#e6211c]" /><Fit w={13}>YouTube</Fit></span>
        <span className="flex items-center gap-[2px]"><span className="h-[5px] w-[4px] bg-[#2f8f5b]" /><Fit w={9}>Maps</Fit></span>
      </div>
    </div>
  );
}

const Field = ({ children, className }: { children: React.ReactNode; className: string }) => (
  <div className={`flex items-center border bg-white pl-[2px] ${className}`}>{children}</div>
);

function Slide() {
  return (
    <div className="relative ml-[207px] mt-[14px] h-[550px] w-[975px] border border-[#c4c6ca] bg-white">
      <div className="absolute left-[790px] top-0 flex h-[49px] w-[114px] items-center bg-[#ffab40] pl-[10px] font-['Liberation_Sans',sans-serif]">
        <Fit w={81} className="mb-px text-[25px] leading-8 text-[#6b5a44]">Team B</Fit>
      </div>
      <div className="absolute left-[17px] top-[66px] flex h-[429px] w-[482px] flex-col bg-[#efeef0]">
        <MiniBrowser url="localhost:9002/login" urlW={38} tabsCls="w-[447px]" barCls="w-[389px]" />
        <div className={`ml-[199px] mt-[19px] w-[84px] ${RB}`}>
          <Fit w={54} className="h-[18px] text-[12px] font-medium leading-[18px] text-[#2b2f36]">Please sign in</Fit>
          <Field className="mt-px h-[17px] border-[#b5d3fa]"><Fit w={21} className="text-[6.500px] leading-[8px] text-[#80868b]">Username</Fit></Field>
          <Field className="mt-[5px] h-[17px] border-[#dcdee2]"><Fit w={20} className="text-[6.500px] leading-[8px] text-[#80868b]">Password</Fit></Field>
          <div className="mt-[5px] flex h-[19px] items-center justify-center rounded-[1px] bg-[#0275ff]"><Fit w={17} className="text-[8px] leading-[10px] text-white">Sign in</Fit></div>
        </div>
      </div>
      <div className="absolute left-[508px] top-[63px] flex h-[434px] w-[471px] flex-col bg-[#efeef0]">
        <MiniBrowser url="localhost:9200/login?error" urlW={47} tabsCls="w-[437px]" barCls="w-[379px]" />
        <div className={`ml-[194px] mt-[20px] w-[82px] ${RB}`}>
          <Fit w={53} className="h-[19px] text-[12px] font-medium leading-[18px] text-[#2b2f36]">Please sign in</Fit>
          <div className="mt-px flex h-[20px] items-center bg-[#fddada] pl-[6px]"><Fit w={31} className="text-[6.500px] leading-[8px] text-[#8a2a2a]">Bad credentials</Fit></div>
          <Field className="mt-[5px] h-[17px] border-[#cfe0f7]"><Fit w={11} className="text-[6.500px] leading-[8px] text-[#33363a]">bbbb</Fit></Field>
          <Field className="mt-[6px] h-[17px] border-[#e6e7ea]"><Fit w={19} className="text-[6.500px] leading-[8px] text-[#80868b]">Password</Fit></Field>
          <div className="mt-[6px] flex h-[19px] items-center justify-center rounded-[1px] bg-[#0275ff]"><Fit w={16} className="text-[8px] leading-[10px] text-white">Sign in</Fit></div>
        </div>
      </div>
      <svg viewBox="0 0 20 20" className="absolute left-[272px] top-[153px] h-[19px] w-[19px]"><path d="m10 .8 3.600 3.800h-2.200v4h4V6.400L19.200 10l-3.800 3.600v-2.200h-4v4h2.200L10 19.200l-3.600-3.800h2.200v-4h-4v2.200L.8 10l3.800-3.600v2.200h4v-4H6.400Z" fill="#fff" stroke="#333" strokeWidth="1" /></svg>
    </div>
  );
}

const ticks = Array.from({ length: 81 }, (_, i) => i);

function Workspace() {
  return (
    <div className="flex min-h-0 flex-1 overflow-hidden bg-[#f9fbff]">
      <FilmStrip />
      <div className="w-[14px] shrink-0 pl-[8px] pt-[594px]"><div className="h-[17px] w-[6px] rounded-full bg-[#dadce0]" /></div>
      <div className="mb-[61px] mt-[22px] flex w-[17px] shrink-0 border-r border-[#bfc2c7]">
        <div className={`flex w-[9px] flex-col pt-[65px] text-[10px] leading-none text-[#5f6368] ${RB}`}>
          {[1, 2, 3, 4, 5].map((n) => <div key={n} className="flex h-[97.500px] shrink-0 items-center justify-center"><span className="-rotate-90">{n}</span></div>)}
        </div>
        <div className="flex w-[7px] flex-col items-end pt-[16px]">
          {ticks.slice(0, 46).map((i) => <div key={i} className="flex h-[12.180px] w-full shrink-0 justify-end"><div className={`h-px bg-[#8a8d91] ${i % 8 === 4 ? "w-[7px]" : "w-[4px]"}`} /></div>)}
        </div>
      </div>
      <div className="flex min-w-0 flex-1 flex-col">
        <div className="h-[23px] shrink-0 border-b border-[#c0c3c8]">
          <div className={`flex h-[10px] pl-[256px] pt-[10px] text-[10px] leading-[10px] text-[#5f6368] ${RB}`}>
            {[1, 2, 3, 4, 5, 6, 7, 8, 9].map((n) => <div key={n} className="w-[97.450px] shrink-0 text-center">{n}</div>)}
          </div>
          <div className="ml-[207px] mt-[5px] flex h-[8px] w-[975px] items-end overflow-hidden border-b border-[#7d8085]">
            {ticks.map((i) => <div key={i} className="flex h-full w-[12.180px] shrink-0 items-end"><div className={`w-px bg-[#7d8085] ${i % 8 === 4 ? "h-[7px]" : "h-[3px]"}`} /></div>)}
          </div>
        </div>
        <Slide />
        <div className="ml-[669px] mt-[15px] h-[2px] w-[40px] rounded bg-[#80868b]" />
        <div className="mb-px mr-[3px] mt-auto flex h-[39px] shrink-0 rounded-t-md bg-[#edf1fa] pl-[14px] pt-[7px] font-['Liberation_Sans',sans-serif]">
          <Fit w={142} className="text-[12.500px] leading-5 text-[#1f2328]">Click to add speaker notes</Fit>
          <div className="-mr-[3px] ml-auto mt-[8px] h-[26px] w-[9px] rounded-l-full border border-r-0 border-[#dfe2ea] bg-white" />
        </div>
      </div>
    </div>
  );
}

/* ---------- Colour app icons ---------- */
type IP = { className?: string };
const Edge = ({ className }: IP) => <svg viewBox="0 0 30 30" className={className}><defs><linearGradient id="eg" x1="0" x2="1"><stop offset="0" stopColor="#1b8fd8" /><stop offset="1" stopColor="#4fd44f" /></linearGradient></defs><path d="M1 14C2 5 8 0 15.500 0 24 0 30 6 30 12.500c0 5-4 7.500-8 7.500-3 0-4.500-1.500-3.500-3 1.500-2.500 0-7.500-6-7.500C7 9.500 3 11 1 14Z" fill="url(#eg)" /><path d="M1 14c4-5 9-4.800 12-3.500-4 2-5 6-3.500 10.500C11.500 26 17 28.500 25 25c-3 4-7 5-10 5C6 30 .2 22 1 14Z" fill="#1464b4" /><path d="M13 11c-4 3-4 8-1 12 3 3.500 9 4 13 2 2-1.200 2-3 0-2.500-7 2-13-1-12-11.500Z" fill="#0d4f97" /></svg>;
const ChromeC = ({ className }: IP) => <svg viewBox="0 0 30 30" className={className}><circle cx="15" cy="15" r="15" fill="#fbc116" /><path d="M15 7.500H28A15 15 0 0 0 2 7.500L8.500 18.800Z" fill="#e33b2e" /><path d="M2 7.500A15 15 0 0 0 15 30l6.500-11.200L15 22.500 8.500 18.800Z" fill="#2da44e" /><circle cx="15" cy="15" r="7.200" fill="#fff" /><circle cx="15" cy="15" r="5.700" fill="#3b7ded" /></svg>;
const Folder = ({ className }: IP) => <svg viewBox="0 0 30 30" className={className}><path d="M0 3a2 2 0 0 1 2-2h8l3 3.500h15a2 2 0 0 1 2 2V27H0Z" fill="#e8a50c" /><path d="M0 7h30v20a2 2 0 0 1-2 2H2a2 2 0 0 1-2-2Z" fill="#fdd45a" /><path d="M5 29v-5a3 3 0 0 1 3-3h14a3 3 0 0 1 3 3v5Z" fill="#1277c9" /><path d="M9 25h12" stroke="#0b4f8c" strokeWidth="1.500" /></svg>;
const Folder10 = ({ className }: IP) => <svg viewBox="0 0 24 24" className={className}><path d="M0 2a1 1 0 0 1 1-1h8v4H0Z" fill="#e0a21a" /><path d="M0 4h24v17H0Z" fill="#fcd462" /><path d="M4 24v-9a2 2 0 0 1 2-2h12a2 2 0 0 1 2 2v9h-4v-5H8v5Z" fill="#3a95e0" /></svg>;
const Eclipse = ({ className }: IP) => <svg viewBox="0 0 30 30" className={className}><circle cx="14" cy="15" r="14" fill="#f7941e" /><circle cx="16.500" cy="15" r="13.500" fill="#2c2255" /><path d="M3.500 11.500h26M3 15h27M3.500 18.500h26" stroke="#fff" strokeWidth="1.800" /></svg>;
const Tile = ({ className, letter, c1, c2 }: IP & { letter: string; c1: string; c2: string }) => (
  <svg viewBox="0 0 30 30" className={className}><path d="M7 2h22v26H7Z" fill={c2} /><path d="M18 2h11v9H18Z" fill="#fff" fillOpacity=".3" /><path d="M7 19h22v9H7Z" fill="#000" fillOpacity=".2" /><rect y="7.500" width="16" height="15" rx="1.500" fill={c1} /><text x="8" y="19.500" fontSize="12" fontWeight="700" fill="#fff" textAnchor="middle" fontFamily="Open Sans">{letter}</text></svg>
);
const TeamsIc = ({ className, dot }: IP & { dot?: boolean }) => <svg viewBox="0 0 30 30" className={className}><circle cx="16" cy="5.500" r="4.800" fill="#7b83eb" /><circle cx="25" cy="7.500" r="3.300" fill="#5059c9" /><path d="M20 12h10v8c0 6-8 6-9 1Z" fill="#5059c9" /><path d="M9 12h14v10c0 8-14 8-14 0Z" fill="#7b83eb" /><rect y="7.500" width="15" height="15" rx="1.500" fill="#4b53bc" /><path d="M4 11.500h7.500M7.700 11.500v8" stroke="#fff" strokeWidth="2" />{dot && <circle cx="28" cy="5.500" r="5.500" fill="#c50f2c" stroke="#fff" strokeWidth="1.200" />}</svg>;
const Sun = ({ className }: IP) => <svg viewBox="0 0 30 30" className={className}><circle cx="15" cy="16" r="12.500" fill="#fba31a" /><path d="M6 10h9M4 15h25M2 20h19M7 25h10" stroke="#ffe3a3" strokeWidth="2" strokeLinecap="round" /></svg>;

function Badge({ children, className }: { children: React.ReactNode; className: string }) {
  return <span className={`absolute flex items-center justify-center rounded-full ${UI} ${className}`}>{children}</span>;
}

function RemoteTaskbar() {
  const cell = "relative flex h-full w-[51px] shrink-0 items-center justify-center pt-[2px]";
  return (
    <div className="flex h-[38px] w-full shrink-0 items-center bg-gradient-to-r from-[#cfe4f0] via-[#d6e3f2] to-[#d9dcee]">
      <div className="flex h-full w-[50px] items-center pl-[16px] pt-[5px]"><svg viewBox="0 0 16 16" className="h-4 w-4"><path d="m0 2.500 7-1V7.500H0ZM8 1.300 16 0v7.500H8ZM0 8.500h7v6l-7-1ZM8 8.500h8V16l-8-1.300Z" fill="#000" /></svg></div>
      <div className={`flex h-full w-[296px] shrink-0 items-center border-x border-t border-[#c9ced4] bg-white ${UI}`}>
        <svg viewBox="0 0 16 18" className="ml-[12px] h-[18px] w-4" fill="none" stroke="#222" strokeWidth="1.600"><circle cx="10" cy="6" r="5" /><path d="m6.500 10-6 7" /></svg>
        <Fit w={135} className="ml-[12px] mt-[2px] text-[15.500px] leading-6 text-[#3d3d3d]">Type here to search</Fit>
      </div>
      <div className={cell}><svg viewBox="0 0 18 18" className="h-[17px] w-[17px]" fill="none" stroke="#111" strokeWidth="1.300"><path d="M1 5.500h10.500v7H1ZM1 1v2h10.500V1M1 17v-2h10.500v2M15.500 1v16" /><circle cx="15.500" cy="6.500" r="1.200" fill="#111" /></svg></div>
      <div className={cell}><svg viewBox="0 0 24 24" className="h-6 w-6"><circle cx="12" cy="12" r="11.500" fill="#ffb12a" /><path d="M12 .5A11.500 11.500 0 0 1 23.500 12c0 3-1 5-2 6.500L12 12Z" fill="#5c49c6" /><path d="M.5 12C1 20 8 24 14 23.500L12 12Z" fill="#ff7a1f" /><path d="M12 5c2 2 4 2 6 2 0 6-2 10-6 12-4-2-6-6-6-12 2 0 4 0 6-2Z" fill="#fff" /><path d="M12 9v5" stroke="#5c49c6" strokeWidth="2" /></svg></div>
      <div className={cell}><ChromeC className="h-[25px] w-[25px]" /><Badge className="bottom-[3px] right-[9px] h-[15px] w-[16px] bg-white text-[9px] font-bold text-[#e0332a]">java</Badge></div>
      <div className={cell}><Edge className="h-[25px] w-[25px]" /></div>
      <div className={cell}><Folder10 className="h-[21px] w-[23px]" /></div>
      <div className={cell}><svg viewBox="0 0 22 22" className="h-[22px] w-[22px]"><path d="M2 15 8 2l12-1-3 19H5Z" fill="#7fb9cf" /><path d="m8 3 9-1-6 13-9 1Z" fill="#b9dcea" /><path d="m20 1 1 16-4 3Z" fill="#5a8593" /></svg></div>
      <div className={cell}><Tile className="h-[25px] w-[25px]" letter="X" c1="#107c41" c2="#21a366" /></div>
      <div className={cell}><Eclipse className="h-[24px] w-[25px]" /></div>
      <div className={cell}><svg viewBox="0 0 24 22" className="h-[21px] w-[23px]"><rect x="5" y="2" width="17" height="13" rx="1" fill="#eef2f5" stroke="#9aa5ad" /><path d="m7 10 3-4 2 6 3-7 2 6 3-2" stroke="#3a7fc0" fill="none" /><path d="M10 15h8l2 4-12 1ZM1 12l5-1v7l-5-1Z" fill="#b5bcc1" /></svg></div>
      <div className={cell}><span className={`flex h-[23px] w-[23px] items-center justify-center rounded-[9px] bg-[#0f9fe3] text-[17px] font-bold text-white ${UI}`}>S</span></div>
      <div className={`${cell} bg-[#fbb17c]`}><TeamsIc className="h-[24px] w-[24px]" /><Badge className="bottom-[3px] right-[11px] h-[14px] w-[14px] bg-[#cf2f33] text-[10px] text-white">6</Badge></div>
      <div className={cell}><svg viewBox="0 0 26 26" className="h-[25px] w-[25px]"><path d="M13 3C17 0 22 2 22 6c4 5 4 12-1 16S6 27 2 20C-1 14 1 6 5 4c0 3 1 4 3 4Z" fill="#1a7bd8" /><circle cx="15" cy="14" r="6" fill="#dceafb" /></svg><Badge className="bottom-[4px] right-[10px] h-[14px] w-[14px] bg-[#ee2240] text-[10px] text-white">2</Badge></div>
      <div className={`${cell} bg-[#eef3fa]`}><ChromeC className="h-[25px] w-[25px]" /><Badge className="bottom-[3px] right-[10px] h-[14px] w-[14px] bg-[#0f7fd6] text-[9px] text-white">A</Badge></div>
      <div className={cell}><Tile className="h-[24px] w-[25px]" letter="W" c1="#185abd" c2="#2b7cd3" /></div>
      <div className={`ml-[141px] flex h-full flex-1 items-center text-[#2a2d33] ${UI}`}>
        <div className="relative"><Sun className="h-6 w-6" /><Badge className="-right-[1px] -top-[1px] h-[13px] w-[12px] bg-[#c43a1c] text-[9px] text-white">1</Badge></div>
        <Fit w={30} className="ml-[8px] mt-[2px] text-[14px] leading-5">34°C</Fit>
        <Fit w={45} className="ml-[9px] mt-[2px] text-[14px] leading-5">Smoke</Fit>
        <svg viewBox="0 0 14 8" className="ml-[25px] h-[8px] w-[14px]" fill="none" stroke="#222" strokeWidth="1.300"><path d="m1 7 6-6 6 6" /></svg>
        <svg viewBox="0 0 17 12" className="ml-[9px] h-[12px] w-[17px]" fill="#111"><path d="M4 3h11v7H4ZM15 5h2v3h-2ZM0 1h5v3L2.500 6 0 4ZM2 5h1v6H2Z" /></svg>
        <svg viewBox="0 0 18 14" className="ml-[8px] mt-px h-[14px] w-[18px]" fill="none" stroke="#222"><path d="M1 5h2l3-3v10L3 9H1ZM9 5c1 1 1 3 0 4M11.500 3c2 2 2 6 0 8M14 1c3 3 3 9 0 12" /></svg>
        <Fit w={23} className="ml-[9px] mt-[2px] text-[13px] leading-5">ENG</Fit>
        <div className="ml-[13px] mt-[2px] flex flex-col items-center"><Fit w={28} className="text-[12.500px] leading-[19px]">16:44</Fit><Fit w={62} className="text-[12.500px] leading-[19px]">13-11-2023</Fit></div>
        <svg viewBox="0 0 18 18" className="ml-[19px] mt-[3px] h-[17px] w-[17px]"><path d="M1 1h15v12H10l-4 4v-4H1Z" fill="#111" /><path d="M3.500 4.500h10M3.500 7.500h10M3.500 10.500h5" stroke="#dde" strokeWidth="1.200" /><circle cx="13" cy="13" r="4" fill="#dde" stroke="#111" /></svg>
        <div className="ml-auto mr-[4px] h-full w-px bg-[#aeb4c4]" />
      </div>
    </div>
  );
}

/* ---------- Participants ---------- */
const people: { n: string; w: number; mic: boolean; gap?: boolean }[] = [
  { n: "Soumita", w: 55, mic: false }, { n: "Sharon Sar...", w: 82, mic: true, gap: true },
  { n: "Gowri Urs", w: 65, mic: true }, { n: "Deepthi Pr...", w: 81, mic: true, gap: true },
  { n: "Sahana S", w: 60, mic: true }, { n: "Keerthana ...", w: 81, mic: true, gap: true },
  { n: "Nireekshitha R", w: 96, mic: false }, { n: "Pranjala J", w: 61, mic: true },
  { n: "Megha Jain", w: 75, mic: true }, { n: "View all", w: 51, mic: false },
];

function Participants() {
  return (
    <div className={`flex w-[312px] shrink-0 flex-col bg-[#1f1f1f] bg-[radial-gradient(circle_at_86px_70px,#2f2e42_0px,#26262e_90px,#1f1f1f_150px)] ${UI}`}>
      <div className="ml-[17px] mt-[26px] grid w-[275px] grid-cols-2">
        {people.map((p, i) => (
          <div key={p.n} className="flex h-[137.500px] flex-col items-center">
            {p.n === "View all" ? (
              <div className="flex h-[88px] w-[88px] shrink-0 items-center justify-center gap-[5px] rounded-full border border-[#5c5c5c] bg-[#292929]">
                <span className="h-[5px] w-[5px] rounded-full bg-white" /><span className="h-[5px] w-[5px] rounded-full bg-white" /><span className="h-[5px] w-[5px] rounded-full bg-white" />
              </div>
            ) : (
              <div className={`flex h-[88px] w-[88px] shrink-0 items-center justify-center rounded-full bg-[#949494] text-white shadow-md ${i === 0 ? "outline-3 outline-offset-[3px] outline-[#7f85f5]" : ""}`}><Person className="h-[50px] w-[50px]" /></div>
            )}
            <div className={`mt-[8px] flex h-[22px] items-center text-white ${p.gap ? "gap-[17px]" : "gap-[12px]"}`}>
              <Fit w={p.w} className="text-[14px] leading-[22px]">{p.n}</Fit>
              {p.mic && <MicOff className="h-4 w-4" />}
            </div>
          </div>
        ))}
      </div>
      <div className="mb-[6px] ml-[5px] mt-auto flex h-[166px] w-[301px] shrink-0 items-center justify-center bg-[#333333] pr-[2px]">
        <div className="flex h-[70px] w-[70px] items-center justify-center rounded-full bg-[#949494] text-white"><Person className="h-[40px] w-[40px]" /></div>
      </div>
    </div>
  );
}

/* ---------- Desktop taskbar ---------- */
const apps: { icon: React.ReactNode; run?: boolean; active?: boolean }[] = [
  { icon: <svg viewBox="0 0 30 30" className="h-[29px] w-[30px]"><path d="M7 1h23v21H7Z" fill="#f4f4f4" /><path d="M0 9h22v20H0Z" fill="#6a6a6a" fillOpacity=".9" /><path d="M7 9h15v13H7Z" fill="#b5b5b5" /></svg> },
  { icon: <Folder className="h-[28px] w-[30px]" />, run: true },
  { icon: <div className="relative"><Edge className="h-[30px] w-[30px]" /><svg viewBox="0 0 16 12" className="absolute bottom-0 left-0 h-[12px] w-4"><path d="M5 2V0h6v2h5v10H0V2Z" fill="#c77a0c" /><path d="M0 7h16" stroke="#7a4300" /></svg></div>, run: true },
  { icon: <svg viewBox="0 0 30 30" className="h-[30px] w-[30px]"><path d="M8 6V2.500A1.500 1.500 0 0 1 9.500 1h11A1.500 1.500 0 0 1 22 2.500V6" fill="none" stroke="#3bb0ee" strokeWidth="2" /><path d="M0 5h30v21a4 4 0 0 1-4 4H4a4 4 0 0 1-4-4Z" fill="#f3f3f3" /><path d="M9 12h5.500v5.500H9Z" fill="#f25022" /><path d="M15.500 12H21v5.500h-5.500Z" fill="#7fba00" /><path d="M9 18.500h5.500V24H9Z" fill="#00a4ef" /><path d="M15.500 18.500H21V24h-5.500Z" fill="#ffb900" /></svg> },
  { icon: <svg viewBox="0 0 28 30" className="h-[29px] w-[27px]"><path d="M16 0 3 7C1.500 8 1 9 1 11v9c0 2 1 3 3 4l6-4V11l6-4 1-6Z" fill="#a9a2f5" /><path d="M16 0l9 6c1.500 1 2 2 2 4v9l-2 4-6-4v-8l-5-5Z" fill="#4f86ea" /><path d="M2 22l10 7c1.500 1 3 1 4.500 0L25 23c1.500-1 2-2 2-4v-3l-8 5-5 3-4-3Z" fill="#b46fdc" /><path d="m10 11 4-2.500 5 3V19l-4.500 2.500L10 19Z" fill="#202b30" /></svg>, run: true },
  { icon: <Tile className="h-[30px] w-[30px]" letter="O" c1="#0f6cbd" c2="#2f9be8" />, run: true },
  { icon: <svg viewBox="0 0 30 30" className="h-[30px] w-[30px]"><circle cx="15" cy="15" r="14" fill="#d35400" stroke="#d35400" strokeWidth="2" strokeDasharray="2 1.500" /><circle cx="16" cy="8" r="2.300" fill="#222" /><path d="M11.500 13h5v10.500M12 24h8" stroke="#222" strokeWidth="3" fill="none" /></svg>, run: true },
  { icon: <TeamsIc className="h-[29px] w-[29px] overflow-visible" dot />, run: true, active: true },
  { icon: <svg viewBox="0 0 30 30" className="h-[30px] w-[30px]"><circle cx="15" cy="15" r="15" fill="#ff6c37" /><circle cx="21.500" cy="8" r="3" fill="#fff" /><path d="m20 10-9 9-3 4M19 13l-6 7" stroke="#fff" strokeWidth="2" fill="none" /></svg>, run: true },
  { icon: <svg viewBox="0 0 30 30" className="h-[29px] w-[29px]"><rect width="30" height="30" rx="2" fill="#20648c" /><path d="M4 7c4-3 8-1 11 4 2 4 3 8 6 11l5 3-4-1M4 7c0 4 3 6 3 9s-1 6 2 8l2-4M22 4l4 4M26 3l-2 4" stroke="#e6eef3" strokeWidth="1.400" fill="none" /></svg>, run: true },
  { icon: <Eclipse className="h-[29px] w-[29px]" />, run: true },
  { icon: <svg viewBox="0 0 30 30" className="h-[29px] w-[30px]"><circle cx="16.500" cy="15" r="13.500" fill="#ef5a3c" /><path d="M16.500 1.500A13.500 13.500 0 0 1 30 15H16.500Z" fill="#ff9068" /><rect y="7" width="15" height="15" rx="1.500" fill="#c43e1c" /><text x="7.500" y="19" fontSize="12" fontWeight="700" fill="#fff" textAnchor="middle" fontFamily="Open Sans">P</text></svg>, run: true },
  { icon: <svg viewBox="0 0 24 30" className="h-[30px] w-[23px]"><rect x="0" y="2" width="24" height="25" rx="2" fill="#5fd0ec" /><path d="M0 27h24v1.500H0Z" fill="#fff" /><path d="M0 28.500h24V30H0Z" fill="#c46a10" /><path d="M4 10h16M4 15h16M4 20h11" stroke="#11657f" strokeWidth="1.700" /><path d="M3 0v4M7.500 0v4M12 0v4M16.500 0v4M21 0v4" stroke="#0e86a8" strokeWidth="2" /></svg>, run: true },
];

function Taskbar() {
  return (
    <div className={`flex h-[60px] shrink-0 items-center border-t border-[#4a4a4a] bg-[linear-gradient(90deg,#401e18_0px,#3c1d1b_80px,#2c2026_130px,#2b2527_200px,#1e2a30_330px,#1d2533_480px,#22203a_525px,#1f2d29_600px,#1d302c_760px,#24262c_860px,#1e202d_980px,#252926_1080px,#2a1d22_1190px,#2d2022_1310px,#3f1d15_1430px,#281c26_1490px,#1e2035_1560px,#1e2035_1760px,#2d1b24_1800px,#3b1d18_1860px)] text-white ${UI}`}>
      <div className="relative ml-[25px]"><Sun className="h-[30px] w-[30px]" /><Badge className="-right-[3px] -top-[7px] h-[19px] w-[19px] bg-[#c42b1c] text-[12px] text-white">1</Badge></div>
      <div className="-mt-[2px] ml-[9px] w-[60px]"><Fit w={32} className="text-[14px] leading-[20px]">28°C</Fit><Fit w={33} className="text-[14px] leading-[20px] text-[#d6d6d6]">Haze</Fit></div>
      <WinLogo className="ml-[323px] h-[29px] w-[29px]" />
      <div className="ml-[18px] flex h-[38px] w-[273px] items-center rounded-full bg-[#f2f2f2]">
        <svg viewBox="0 0 20 20" className="ml-[14px] h-[20px] w-[19px]" fill="none" stroke="#222" strokeWidth="2"><circle cx="8.500" cy="8.500" r="7" /><path d="m14 14 5 5" /></svg>
        <Fit w={51} className="ml-[12px] text-[16px] leading-6 text-[#5c5c5c]">Search</Fit>
        <div className="ml-auto mr-[3px] flex h-[33px] w-[66px] items-center justify-center rounded-full bg-black"><Fit w={35} className="text-[9px] font-semibold leading-4">lululemon</Fit></div>
      </div>
      <div className="ml-[3px] flex h-full">
        {apps.map((a, i) => (
          <div key={i} className="flex h-full w-[55px] justify-center">
            <div className={`mt-[4px] flex h-[50px] w-[50px] flex-col items-center rounded ${a.active ? "bg-white/10" : ""}`}>
              <div className="mt-[10px] flex h-[30px] items-center">{a.icon}</div>
              {a.run && <div className={`mt-[5px] h-[4px] rounded-full ${a.active ? "w-5 bg-[#60cdff]" : "w-2 bg-[#9a9a9a]"}`} />}
            </div>
          </div>
        ))}
      </div>
      <div className="ml-[31px] flex h-full items-center">
        <svg viewBox="0 0 14 10" className="h-[9px] w-[14px]" fill="none" stroke="#fff" strokeWidth="2"><path d="m1 8 6-6 6 6" /></svg>
        <svg viewBox="0 0 20 13" className="ml-[23px] h-[13px] w-[20px]"><path d="M5 13a4.500 4.500 0 0 1-.5-9A6 6 0 0 1 15.500 5 4 4 0 0 1 16 13Z" fill="#1490df" /><path d="M4.500 4A6 6 0 0 1 15.500 5L8 10Z" fill="#0a5cab" /></svg>
        <div className="ml-[10px] flex h-[50px] w-[40px] items-center justify-center rounded bg-white/10"><MicOff className="h-[22px] w-[22px]" /></div>
        <div className="-mt-[2px] ml-[14px] flex w-[28px] flex-col items-center"><Fit w={28} className="text-[14px] leading-[20px]">ENG</Fit><Fit w={15} className="text-[14px] leading-[20px]">IN</Fit></div>
        <svg viewBox="0 0 20 16" className="ml-[23px] h-[16px] w-[20px]" fill="none" stroke="#fff" strokeWidth="1.600" strokeLinecap="round"><path d="M1 6c5-6 13-6 18 0M4 9c4-4 8-4 12 0M7 11.800c2-2 4-2 6 0" /><circle cx="10" cy="14" r="1.200" fill="#fff" /></svg>
        <svg viewBox="0 0 20 18" className="ml-[10px] h-[18px] w-[20px]" fill="none" stroke="#fff" strokeWidth="1.400" strokeLinecap="round"><path d="M1 6.500h3l4-4v13l-4-4H1ZM11 6.500c1.500 1.500 1.500 3.500 0 5M13.800 4.200c3 3 3 6.600 0 9.600M16.500 2c4 4 4 10 0 14" /></svg>
        <svg viewBox="0 0 20 14" className="ml-[10px] h-[14px] w-[20px]"><rect x=".8" y=".8" width="16" height="12.400" rx="3" fill="none" stroke="#fff" strokeWidth="1.500" /><rect x="3" y="3" width="9" height="8" rx="1" fill="#fff" /><path d="M18.500 5v4" stroke="#fff" strokeWidth="2" /></svg>
        <div className="-mt-[2px] ml-[20px] flex flex-col items-end"><Fit w={36} className="text-[14px] leading-[20px]">16:44</Fit><Fit w={78} className="text-[14px] leading-[20px]">13-11-2023</Fit></div>
        <svg viewBox="0 0 18 20" className="ml-[11px] h-[20px] w-[18px]" fill="none" stroke="#fff" strokeWidth="1.400" strokeLinejoin="round"><path d="M8.500 2.500C4.500 2.500 3.200 5.500 3.200 9v3L1.200 15.500H15.500L14 12M6 16c.5 3 4.500 3 5 0M6.500 6.500h4L6.500 11.500h4.500M12.500 1h4L12.500 5.500H17" /></svg>
      </div>
    </div>
  );
}

export default function App() {
  return (
    <div className="flex h-[1080px] w-[1920px] flex-col overflow-hidden bg-[#1f1f1f]">
      <div className={`flex h-[49px] shrink-0 items-center border-b border-black bg-[#0a0a0a] text-white ${UI}`}>
        <Fit w={64} className="ml-[928px] mt-px text-[16px] leading-6">Meeting</Fit>
        <svg viewBox="0 0 16 16" className="ml-[795px] h-4 w-4"><path d="M0 6.500h16" stroke="#fff" strokeWidth="1.200" /></svg>
        <svg viewBox="0 0 18 18" className="ml-[33px] h-[18px] w-[18px]" fill="none" stroke="#fff" strokeWidth="1.300"><path d="M1 4h13v13H1ZM4 4V1h13v13h-3" /></svg>
        <svg viewBox="0 0 16 16" className="ml-[33px] h-4 w-4"><path d="m.5.5 15 15M15.500.5l-15 15" stroke="#fff" strokeWidth="1.300" /></svg>
      </div>
      <MeetingBar />
      <div className="flex h-[896px] shrink-0">
        <div className="relative ml-[17px] mt-[6px] flex h-[884px] w-[1580px] shrink-0 flex-col overflow-hidden bg-[#1b1a1c]">
          <div className="h-[8px] shrink-0 bg-[#0a0a0b]" />
          <div className="ml-[9px] flex h-[838px] w-[1571px] shrink-0 flex-col overflow-hidden bg-[#c9daf8]">
            <TabStrip />
            <NavBar />
            <DocsHeader />
            <DocsToolbar />
            <Workspace />
          </div>
          <RemoteTaskbar />
          <div className={`absolute bottom-[10px] left-0 flex h-[30px] gap-[10px] text-white ${UI}`}>
            <div className="flex w-[69px] items-center rounded bg-[#3b3f44]/75 pl-[7px] pt-[2px]"><Fit w={54} className="text-[14px] leading-6">Soumita</Fit></div>
            <div className="flex w-[82px] items-center rounded bg-[#4a4a4a]/70 pl-[13px]">
              <svg viewBox="0 0 16 16" className="h-4 w-4"><path d="M1 8h14" stroke="#b5b5b5" strokeWidth="1.300" /></svg>
              <svg viewBox="0 0 16 16" className="ml-[24px] h-[15px] w-[15px]"><path d="M0 8h16M8 0v16" stroke="#fff" strokeWidth="1.300" /></svg>
            </div>
          </div>
        </div>
        <div className="w-[11px] shrink-0" />
        <Participants />
      </div>
      <Taskbar />
    </div>
  );
}
